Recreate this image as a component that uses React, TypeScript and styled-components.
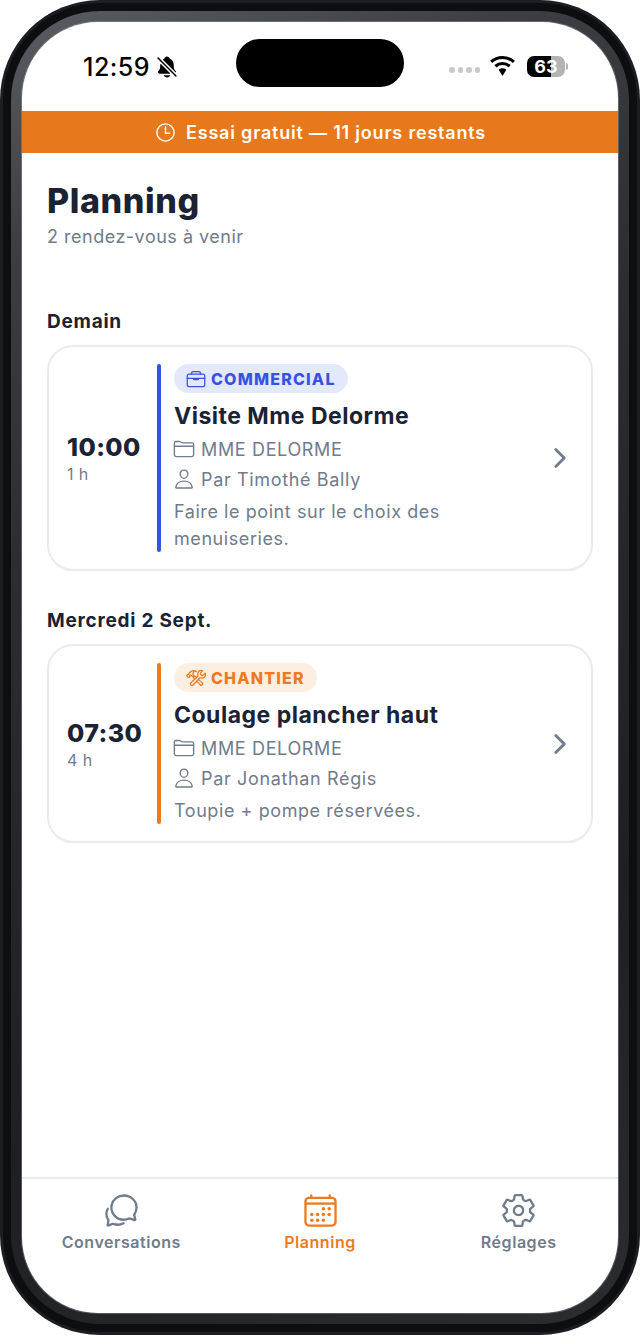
import React from 'react';
import styled, { createGlobalStyle } from 'styled-components';
import {
	IoBriefcaseOutline,
	IoCalendarOutline,
	IoChatbubblesOutline,
	IoChevronForward,
	IoConstructOutline,
	IoFolderOutline,
	IoNotificationsOff,
	IoPersonOutline,
	IoSettingsOutline,
	IoTimeOutline,
} from 'react-icons/io5';

const GlobalStyle = createGlobalStyle`
	html, body {
		margin: 0;
		padding: 0;
		background: #fff;
		font-family: Inter, "Noto Sans", sans-serif;
	}
`;

const Phone = styled.div`
	width: 640px;
	height: 1335px;
	box-sizing: border-box;
	padding: 3px;
	border-radius: 100px;
	background: #1d1e21;
`;

const InnerRing = styled.div`
	height: 100%;
	box-sizing: border-box;
	padding: 8px;
	border-radius: 97px;
	background: #0d0e10;
`;

const Bezel = styled.div`
	height: 100%;
	box-sizing: border-box;
	padding: 11px;
	border-radius: 89px;
	background: linear-gradient(155deg, #5a5d63 0%, #3c3e43 15%, #2b2d31 35%, #1e1f23 72%, #2c2d31 100%);
`;

const Screen = styled.div`
	height: 100%;
	display: flex;
	flex-direction: column;
	border-radius: 76px;
	overflow: hidden;
	background: #fff;
	box-shadow: 0 0 0 1px rgba(150, 152, 158, 0.45);
`;

const StatusBar = styled.div`
	height: 89px;
	flex: none;
	box-sizing: border-box;
	padding-top: 17px;
	display: grid;
	grid-template-columns: 1fr auto 1fr;
`;

const StatusLeft = styled.div`
	display: flex;
	align-items: center;
	gap: 5px;
	height: 48px;
	padding: 8px 0 0 61px;
	box-sizing: border-box;
	font-size: 25px;
	font-weight: 500;
	letter-spacing: 0.5px;
	color: #000;
`;

const Island = styled.div`
	width: 168px;
	height: 48px;
	border-radius: 24px;
	background: #000;
`;

const StatusRight = styled.div`
	display: flex;
	align-items: center;
	height: 48px;
	padding: 6px 0 0 45px;
	box-sizing: border-box;
`;

const Dots = styled.div`
	display: flex;
	gap: 3px;
	margin-right: 8px;
	margin-top: 8px;
`;

const Dot = styled.span`
	width: 5.5px;
	height: 5.5px;
	border-radius: 50%;
	background: #c9c9c9;
`;

const Battery = styled.div`
	width: 38px;
	height: 21px;
	margin-left: 10px;
	border-radius: 7px;
	background: linear-gradient(to right, #000 63%, #b4b4b4 63%);
	color: #fff;
	font-size: 18px;
	font-weight: 700;
	line-height: 21px;
	text-align: center;
`;

const BatteryNub = styled.span`
	width: 2px;
	height: 7px;
	margin-left: 1px;
	border-radius: 0 2px 2px 0;
	background: #b4b4b4;
`;

const TrialBanner = styled.div`
	height: 42px;
	flex: none;
	display: flex;
	align-items: center;
	justify-content: center;
	gap: 9px;
	background: #e8781c;
	color: #fff;
	font-size: 18px;
	font-weight: 600;
	letter-spacing: 0.8px;
`;

const Content = styled.main`
	flex: 1;
	padding: 28px 25px 0;
`;

const Title = styled.h1`
	margin: 0;
	font-size: 34px;
	line-height: 40px;
	font-weight: 800;
	letter-spacing: 0.6px;
	color: #1a2233;
`;

const Subtitle = styled.p`
	margin: 2px 0 0;
	font-size: 18px;
	line-height: 28px;
	letter-spacing: 0.5px;
	color: #707b8b;
`;

const DayLabel = styled.h2<{ $first?: boolean }>`
	margin: ${(p) => (p.$first ? '58px' : '37px')} 0 10px;
	font-size: 19px;
	line-height: 26px;
	font-weight: 700;
	letter-spacing: 0.75px;
	color: #1a2233;
`;

const Card = styled.article`
	display: flex;
	align-items: stretch;
	padding: 17px 16px 17px 18px;
	border: 2px solid #e8ecf2;
	border-radius: 26px;
	background: #fff;
`;

const TimeColumn = styled.div`
	width: 90px;
	flex: none;
	box-sizing: border-box;
	padding-top: 4px;
	display: flex;
	flex-direction: column;
	justify-content: center;
`;

const Time = styled.div`
	font-size: 25px;
	line-height: 28px;
	font-weight: 800;
	letter-spacing: 0.4px;
	color: #1a2233;
`;

const Duration = styled.div`
	font-size: 16px;
	line-height: 26px;
	letter-spacing: 0.4px;
	color: #707b8b;
`;

const AccentBar = styled.div<{ $color: string }>`
	width: 4px;
	flex: none;
	border-radius: 2px;
	background: ${(p) => p.$color};
`;

const Details = styled.div`
	flex: 1;
	min-width: 0;
	padding-left: 13px;
`;

const TypePill = styled.div<{ $color: string; $bg: string }>`
	display: inline-flex;
	align-items: center;
	gap: 5px;
	height: 29px;
	padding: 0 12px;
	border-radius: 15px;
	background: ${(p) => p.$bg};
	color: ${(p) => p.$color};
	font-size: 16px;
	font-weight: 800;
	letter-spacing: 1.2px;
`;

const EventTitle = styled.h3`
	margin: 5px 0 0;
	font-size: 23px;
	line-height: 36px;
	font-weight: 700;
	letter-spacing: 0.5px;
	color: #1a2233;
`;

const MetaRow = styled.div`
	display: flex;
	align-items: center;
	gap: 6px;
	height: 30px;
	margin-left: -1px;
	font-size: 18px;
	letter-spacing: 0.65px;
	color: #707b8b;
`;

const Note = styled.p`
	margin: 4px 0 0;
	width: 340px;
	font-size: 18px;
	line-height: 27px;
	letter-spacing: 0.57px;
	color: #707b8b;
`;

const Chevron = styled.div`
	flex: none;
	display: flex;
	align-items: center;
	color: #707b8b;
`;

const TabBar = styled.nav`
	height: 136px;
	flex: none;
	box-sizing: border-box;
	display: flex;
	padding-top: 10px;
	border-top: 2px solid #e8ecf2;
`;

const Tab = styled.div<{ $active?: boolean }>`
	flex: 1;
	display: flex;
	flex-direction: column;
	align-items: center;
	color: ${(p) => (p.$active ? '#ee7a1e' : '#707b8b')};
	font-size: 16px;
	font-weight: 600;
	line-height: 22px;
	letter-spacing: 0.55px;
`;

const TabIcon = styled.div`
	height: 42px;
	display: flex;
	align-items: center;
	justify-content: center;
`;

const WifiIcon = () => (
	<svg width="29" height="22" viewBox="0 0 26 20" fill="#000">
		<path d="M13 3.6c3.6 0 6.9 1.4 9.4 3.7l1.9-2.1A16.6 16.6 0 0 0 13 .8 16.6 16.6 0 0 0 1.7 5.2l1.9 2.1A13.8 13.8 0 0 1 13 3.6z" />
		<path d="M13 9.2c2.1 0 4 .8 5.5 2.1l1.9-2.1A11 11 0 0 0 13 6.4a11 11 0 0 0-7.4 2.8l1.9 2.1A8.2 8.2 0 0 1 13 9.2z" />
		<path d="M13 12c-1.4 0-2.6.5-3.5 1.3L13 19l3.5-5.7A5.2 5.2 0 0 0 13 12z" />
	</svg>
);

const events = [
	{
		day: 'Demain',
		time: '10:00',
		duration: '1 h',
		type: 'COMMERCIAL',
		color: '#3553e0',
		bg: '#e4e8fb',
		title: 'Visite Mme Delorme',
		author: 'Par Timothé Bally',
		note: 'Faire le point sur le choix des menuiseries.',
	},
	{
		day: 'Mercredi 2 Sept.',
		time: '07:30',
		duration: '4 h',
		type: 'CHANTIER',
		color: '#ee7a1e',
		bg: '#fdeee2',
		title: 'Coulage plancher haut',
		author: 'Par Jonathan Régis',
		note: 'Toupie + pompe réservées.',
	},
];

function App() {
	return (
		<Phone>
			<GlobalStyle />
			<InnerRing>
				<Bezel>
					<Screen>
						<StatusBar>
							<StatusLeft>
								12:59
								<IoNotificationsOff size={24} />
							</StatusLeft>
							<Island />
							<StatusRight>
								<Dots>
									<Dot />
									<Dot />
									<Dot />
									<Dot />
								</Dots>
								<WifiIcon />
								<Battery>63</Battery>
								<BatteryNub />
							</StatusRight>
						</StatusBar>
						<TrialBanner>
							<IoTimeOutline size={23} />
							Essai gratuit — 11 jours restants
						</TrialBanner>
						<Content>
							<Title>Planning</Title>
							<Subtitle>2 rendez-vous à venir</Subtitle>
							{events.map((event, index) => (
								<section key={event.time}>
									<DayLabel $first={index === 0}>{event.day}</DayLabel>
									<Card>
										<TimeColumn>
											<Time>{event.time}</Time>
											<Duration>{event.duration}</Duration>
										</TimeColumn>
										<AccentBar $color={event.color} />
										<Details>
											<TypePill $color={event.color} $bg={event.bg}>
												{index === 0 ? (
													<IoBriefcaseOutline size={20} />
												) : (
													<IoConstructOutline size={20} />
												)}
												{event.type}
											</TypePill>
											<EventTitle>{event.title}</EventTitle>
											<MetaRow>
												<IoFolderOutline size={22} />
												MME DELORME
											</MetaRow>
											<MetaRow>
												<IoPersonOutline size={22} />
												{event.author}
											</MetaRow>
											<Note>{event.note}</Note>
										</Details>
										<Chevron>
											<IoChevronForward size={30} />
										</Chevron>
									</Card>
								</section>
							))}
						</Content>
						<TabBar>
							<Tab>
								<TabIcon>
									<IoChatbubblesOutline size={37} />
								</TabIcon>
								Conversations
							</Tab>
							<Tab $active>
								<TabIcon>
									<IoCalendarOutline size={37} />
								</TabIcon>
								Planning
							</Tab>
							<Tab>
								<TabIcon>
									<IoSettingsOutline size={37} />
								</TabIcon>
								Réglages
							</Tab>
						</TabBar>
					</Screen>
				</Bezel>
			</InnerRing>
		</Phone>
	);
}

export default App;
